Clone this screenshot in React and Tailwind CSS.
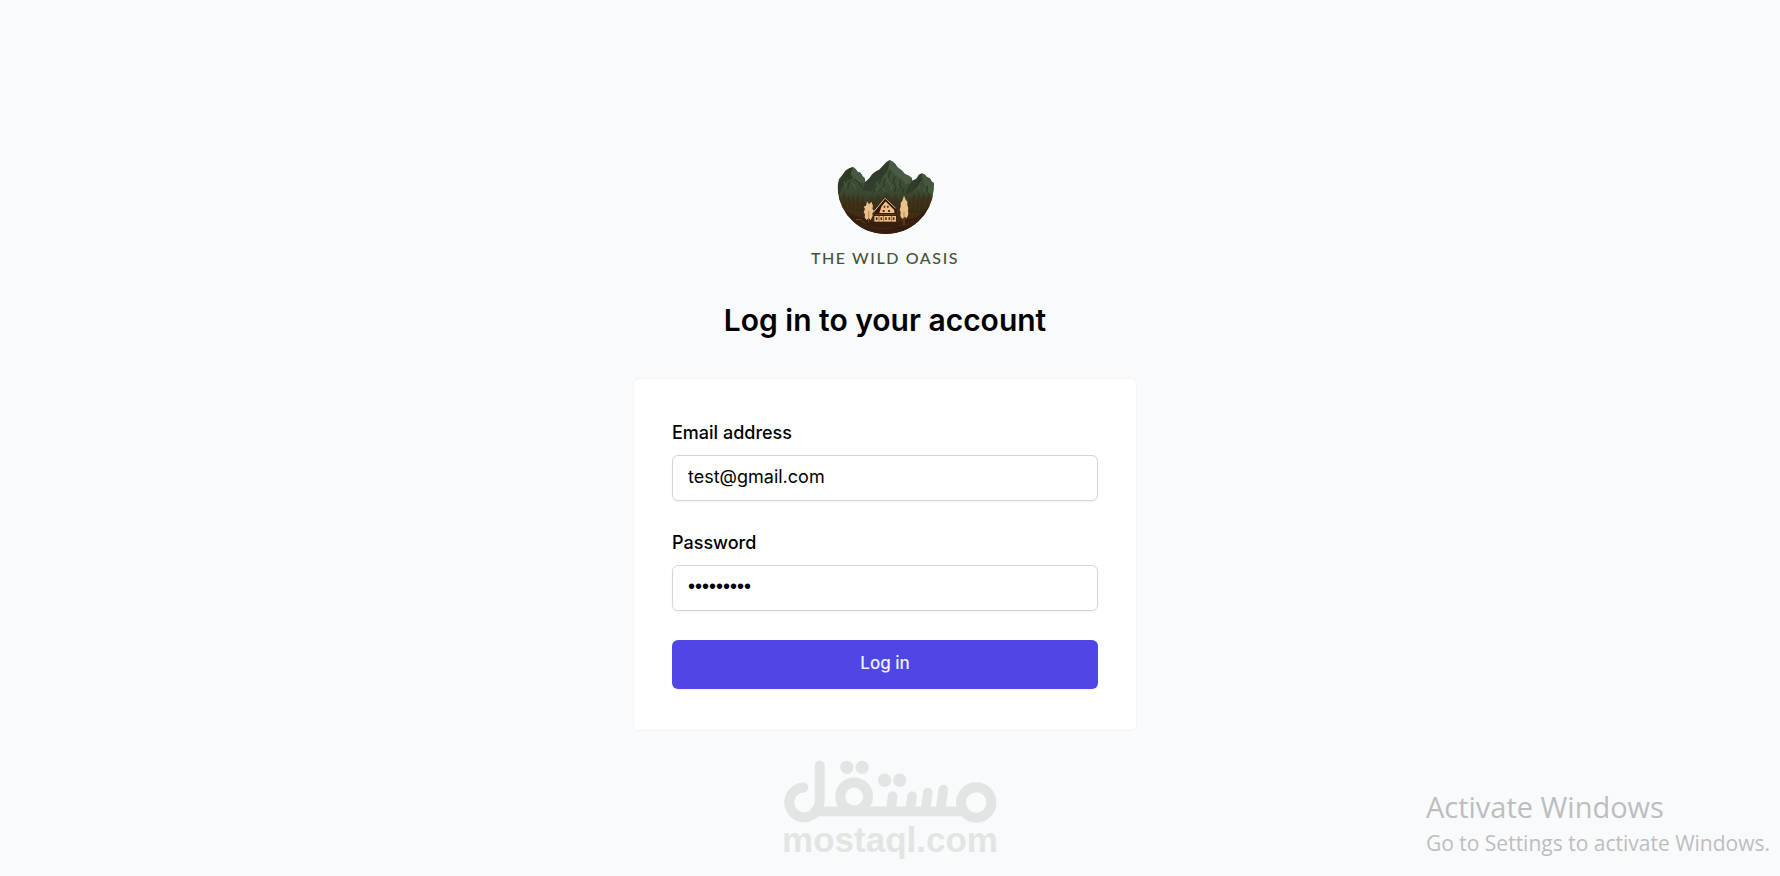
import { useState } from "react";

function LodgeEmblem() {
  return (
    <svg viewBox="30 24 300 228" className="h-[76px] w-[100px]" role="img" aria-label="Lodge beneath mountains">
      <defs>
        <linearGradient id="ground" x1="0" y1="0" x2="0" y2="1">
          <stop offset="0" stopColor="#42533c" />
          <stop offset="0.45" stopColor="#3a4932" />
          <stop offset="0.6" stopColor="#383b24" />
          <stop offset="0.8" stopColor="#3f2a14" />
          <stop offset="1" stopColor="#2f1b0d" />
        </linearGradient>
        <linearGradient id="earth" x1="0" y1="0" x2="0" y2="1">
          <stop offset="0" stopColor="#4a2b12" stopOpacity="0" />
          <stop offset="0.5" stopColor="#4a2a12" stopOpacity="0.4" />
          <stop offset="1" stopColor="#3b200e" />
        </linearGradient>
        <clipPath id="outline">
          <path d="M38 102 L42 84 L52 72 L62 58 L74 51 L84 48 L92 54 L98 62 L107 65 L113 76 L119 81 L121 93 L133 82 L141 70 L151 62 L163 56 L174 44 L184 33 L194 27 L204 32 L211 39 L217 48 L230 58 L240 69 L252 74 L260 80 L262 89 L274 83 L281 71 L290 67 L299 70 L305 77 L315 82 L321 92 L327 96 L326 116 A144 144 0 0 1 182 249 A144 144 0 0 1 38 116 Z" />
        </clipPath>
      </defs>
      <g clipPath="url(#outline)">
        <rect x="30" y="24" width="300" height="228" fill="url(#ground)" />
        <path d="M38 102 L52 72 L74 51 L84 48 L76 66 L82 82 L68 88 L54 104 L44 126 L38 134 Z" fill="#2e3a24" />
        <path d="M84 48 L98 62 L107 65 L113 76 L119 81 L121 96 L108 94 L96 88 L86 80 L80 68 Z" fill="#465a42" />
        <path d="M194 27 L174 44 L151 62 L133 82 L121 93 L112 118 L138 122 L151 98 L168 82 L178 66 L188 56 Z" fill="#313d2a" />
        <path d="M194 27 L211 39 L217 48 L240 69 L260 80 L258 98 L242 100 L230 84 L213 74 L200 60 L191 50 Z" fill="#485b45" />
        <path d="M290 67 L274 83 L262 89 L250 106 L240 130 L260 124 L276 104 L288 88 Z" fill="#303c27" />
        <path d="M290 67 L305 77 L321 92 L327 96 L324 130 L310 126 L302 102 L294 92 Z" fill="#44583d" />
        <g fill="none" strokeLinejoin="round">
          <path d="M190 40 L184 60 L170 76 L164 94 L150 108 L146 124 M196 58 L190 78 L178 88 L176 106 L164 120 M210 76 L204 94 L214 108 L208 124 M226 88 L224 104 L236 116 L232 130" stroke="#2a3623" strokeWidth="3" />
          <path d="M200 46 L204 58 L216 64 L224 76 M184 72 L188 90 L200 104 L198 118 M220 94 L216 112 M238 84 L248 90 M156 92 L160 108 L152 120 M172 112 L182 120" stroke="#4d614b" strokeWidth="3" />
          <path d="M90 70 L96 80 L108 84 M66 78 L58 94 L62 108 M78 96 L88 102 L94 116 M286 102 L280 116 M306 92 L314 106 L318 118 M296 108 L300 124" stroke="#485d43" strokeWidth="3" />
          <path d="M78 60 L66 76 L60 88 M90 86 L102 96 L110 110 M74 92 L68 112 M292 80 L280 98 L266 114 M308 104 L306 122" stroke="#293521" strokeWidth="3" />
        </g>
        <rect x="30" y="120" width="300" height="132" fill="url(#earth)" />
        <g fill="#352512">
          <path d="M38 174 L44 128 L50 150 L57 118 L64 151 L71 128 L77 157 L84 131 L91 160 L99 125 L106 158 L113 132 L121 160 L128 142 L134 185 Z" opacity="0.5" />
          <path d="M248 184 L254 138 L261 154 L267 124 L274 153 L282 120 L289 149 L296 124 L303 150 L311 122 L318 146 L327 122 L322 190 Z" opacity="0.5" />
          <path d="M130 164 L141 132 L149 150 L158 128 L170 142 L186 126 L202 145 L213 128 L223 152 L228 136 L236 178 Z" opacity="0.3" />
        </g>
        <path d="M44 150v24 M54 145v34 M67 146v33 M80 154v28 M92 144v37 M104 147v26 M260 146v30 M270 144v36 M284 142v35 M299 143v29 M313 138v35" stroke="#573318" strokeWidth="2" />
        <path d="M50 174 L92 194 L145 212 L220 214 L275 198 L322 164 L290 228 L182 252 L84 228 Z" fill="#2f1a0d" opacity="0.6" />
        <path d="M84 216 L110 226 L132 224 M137 229 L170 234 L204 230 M215 224 L244 221 L268 208" fill="none" stroke="#54311a" strokeWidth="2" />
        <path d="M92 206 L108 206 L120 218" fill="none" stroke="#94602f" strokeWidth="2" />
      </g>
      <path d="M131 220 V180 M237 223 V145" stroke="#3a1d0d" strokeWidth="4" />
      <path d="M126 151 L132 160 L139 152 L144 164 L142 173 L147 180 L142 187 L143 194 L137 207 L131 202 L124 207 L119 199 L120 190 L116 184 L120 174 L116 167 L123 164 Z" fill="#ecc08a" />
      <path d="M237 134 L242 146 L247 152 L247 162 L250 171 L249 180 L250 190 L245 202 L239 197 L232 204 L226 195 L227 183 L224 176 L227 167 L227 156 L232 149 Z" fill="#ecc08a" />
      <path d="M131 180 V215 M237 182 V222" stroke="#a06c3c" strokeWidth="2" />
      <path d="M148 186 L181 142 L215 176 L213 214 L147 214 Z" fill="#34190c" />
      <path d="M163 186 L170 166 L182 151 L208 177 V186 H163 Z" fill="#efc083" />
      <path d="M145 184 L180 142 L212 172" fill="none" stroke="#f0c084" strokeWidth="3" />
      <path d="M151 184 L181 147 L212 177" fill="none" stroke="#2d150b" strokeWidth="4" />
      <path d="M176 164h5v6h-5z M186 164h5v6h-5z M173 177h6v6h-6z M189 177h6v6h-6z" fill="#54301a" />
      <path d="M150 191 H214" stroke="#8a5a30" strokeWidth="2" />
      <path d="M148 195h65v17h-65z" fill="#efc083" />
      <path d="M155 199v8 M169 199v8 M183 199v8 M193 199v8 M206 199v8" stroke="#54301a" strokeWidth="5" />
      <path d="M162 195v17 M176 195v17 M200 195v17" stroke="#6a3d1f" strokeWidth="2" />
    </svg>
  );
}

function Field({ id, label, type, value, onChange, autoComplete, inputFont }) {
  return (
    <div className="flex flex-col gap-[10px]">
      <label htmlFor={id} className="text-lg leading-[25px] font-medium">
        {label}
      </label>
      <input
        id={id}
        type={type}
        value={value}
        onChange={(event) => onChange(event.target.value)}
        autoComplete={autoComplete}
        className={`h-[46px] w-full rounded-md border border-gray-300 bg-white px-[15px] pb-0.5 shadow-xs outline-none focus:border-indigo-600 ${inputFont}`}
      />
    </div>
  );
}

function MostaqlMark() {
  return (
    <div className="pointer-events-none absolute bottom-[19px] left-1/2 flex -translate-x-1/2 flex-col items-center text-[#e3e5e4]">
      <svg viewBox="36 28 648 190" className="h-[63px] w-[216px]" fill="none" stroke="currentColor" strokeWidth="30" strokeLinecap="round" aria-hidden="true">
        <path d="M99 111 A45 45 0 1 0 144 170 Q148 161 148 150 V45" />
        <path d="M134 183 H573" />
        <circle cx="252" cy="138" r="42" />
        <circle cx="620" cy="156" r="46" />
        <path d="M368 137 L363 180 M427 137 L420 180 M474 126 L467 180 M521 117 L512 180" strokeWidth="29" />
        <g fill="currentColor" stroke="none">
          <circle cx="230" cy="50" r="20" />
          <circle cx="276" cy="50" r="20" />
          <circle cx="344" cy="89" r="20" />
          <circle cx="389" cy="89" r="20" />
        </g>
      </svg>
      <span className="font-['Liberation_Sans',sans-serif] text-[35px] leading-[34px] font-bold">mostaql.com</span>
    </div>
  );
}

export default function App() {
  const [email, setEmail] = useState("test@gmail.com");
  const [password, setPassword] = useState("oasis1234");

  return (
    <div className="relative min-h-screen overflow-hidden bg-gray-50 font-[Inter,sans-serif] text-black">
      <main className="flex min-h-screen flex-col items-center justify-center pt-[13px] pr-[10px]">
        <div className="flex flex-col items-center gap-[11px]">
          <LodgeEmblem />
          <p className="font-[Lato,sans-serif] text-base leading-6 font-medium tracking-widest text-[#475338]">THE WILD OASIS</p>
        </div>
        <h1 className="mt-[30px] text-[30px] leading-10 font-semibold">Log in to your account</h1>
        <form
          onSubmit={(event) => event.preventDefault()}
          className="mt-[38px] flex w-full max-w-[504px] flex-col gap-[29px] rounded-md border border-gray-100 bg-white px-[38px] py-[41px]"
        >
          <Field id="email" label="Email address" type="email" value={email} onChange={setEmail} autoComplete="username" inputFont="text-lg" />
          <Field
            id="password"
            label="Password"
            type="password"
            value={password}
            onChange={setPassword}
            autoComplete="current-password"
            inputFont="font-['Liberation_Sans',sans-serif] text-xl"
          />
          <button type="submit" className="h-[49px] rounded-md bg-[#4f46e5] text-[17px] font-medium text-indigo-50 shadow-xs">
            Log in
          </button>
        </form>
      </main>
      <MostaqlMark />
      <aside className="pointer-events-none absolute right-[10px] bottom-[17px] font-['Open_Sans',sans-serif] text-[#bdbebf]">
        <p className="text-[29px] leading-10">Activate Windows</p>
        <p className="text-[21px] leading-8">Go to Settings to activate Windows.</p>
      </aside>
    </div>
  );
}
